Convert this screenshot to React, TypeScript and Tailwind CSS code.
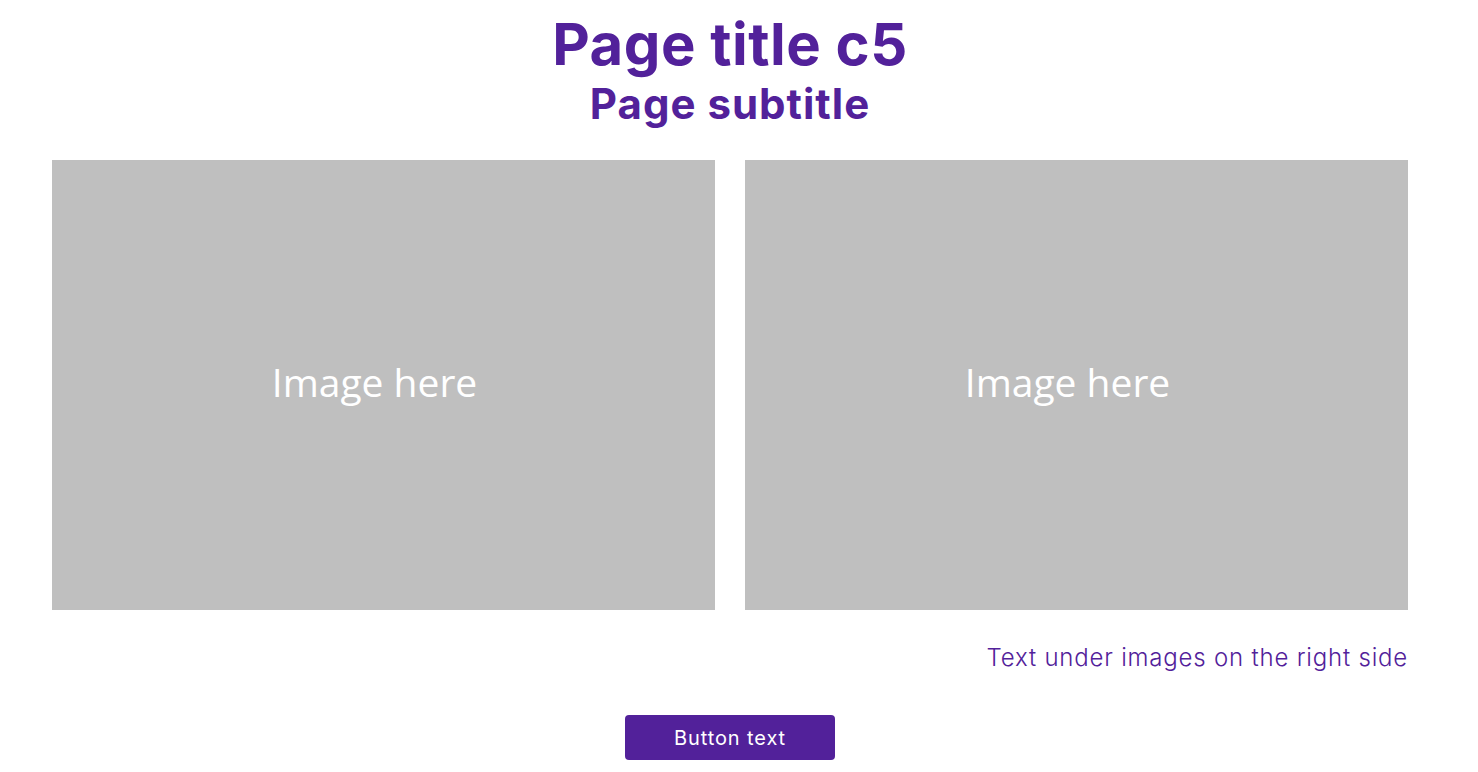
export default function App() {
  return (
    <div className="w-[1460px] bg-white px-[52px] pt-[8px] pb-[12px] font-['Inter','Open_Sans',sans-serif] text-[#52219a]">
      {/* Заголовки */}
      <div className="flex flex-col items-center">
        <h1 className="text-[58px] leading-[72px] font-bold tracking-[0.5px]">Page title c5</h1>
        <h2 className="mt-[-2px] text-[42px] leading-[52px] font-bold tracking-[1px]">Page subtitle</h2>
      </div>

      {/* Картинки */}
      <div className="mt-[30px] grid grid-cols-2 gap-[30px]">
        <div className="flex h-[450px] items-center justify-center bg-[#bfbfbf] pr-[18px] pb-[6px]">
          <span className="font-['Open_Sans',sans-serif] text-[39px] text-white">Image here</span>
        </div>
        <div className="flex h-[450px] items-center justify-center bg-[#bfbfbf] pr-[18px] pb-[6px]">
          <span className="font-['Open_Sans',sans-serif] text-[39px] text-white">Image here</span>
        </div>
      </div>

      <p className="mt-[32px] text-right text-[24px] leading-[32px] font-light tracking-[0.8px]">Text under images on the right side</p>

      <div className="mt-[41px] flex justify-center">
        <button className="h-[45px] w-[210px] rounded-[4px] bg-[#52219a] text-[20px] tracking-[0.9px] text-white">Button text</button>
      </div>
    </div>
  )
}
